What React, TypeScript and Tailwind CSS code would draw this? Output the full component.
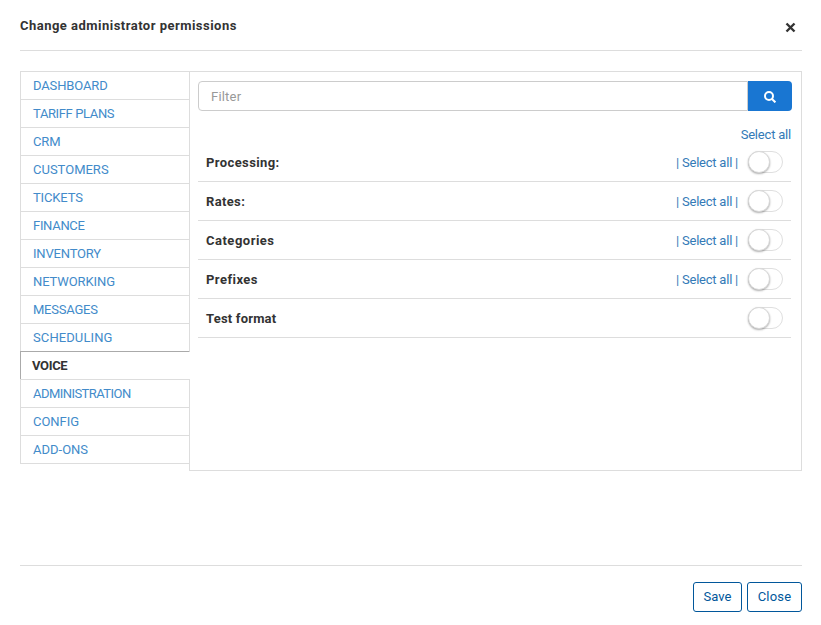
const sections = [
  { label: 'DASHBOARD', tracking: 'tracking-[-0.13px]' },
  { label: 'TARIFF PLANS', tracking: 'tracking-[-0.38px]' },
  { label: 'CRM', tracking: 'tracking-[-0.1px]' },
  { label: 'CUSTOMERS', tracking: 'tracking-[0px]' },
  { label: 'TICKETS', tracking: 'tracking-[-0.15px]' },
  { label: 'FINANCE', tracking: 'tracking-[-0.3px]' },
  { label: 'INVENTORY', tracking: 'tracking-[-0.18px]' },
  { label: 'NETWORKING', tracking: 'tracking-[-0.1px]' },
  { label: 'MESSAGES', tracking: 'tracking-[-0.23px]' },
  { label: 'SCHEDULING', tracking: 'tracking-[0.1px]' },
  { label: 'VOICE', tracking: 'tracking-[-0.35px]', active: true },
  { label: 'ADMINISTRATION', tracking: 'tracking-[-0.55px]' },
  { label: 'CONFIG', tracking: 'tracking-[-0.05px]' },
  { label: 'ADD-ONS', tracking: 'tracking-[0px]' },
];

const rows = [
  { label: 'Processing:', tracking: 'tracking-[0.4px]', all: true },
  { label: 'Rates:', tracking: 'tracking-[0.35px]', all: true },
  { label: 'Categories', tracking: 'tracking-[0.5px]', all: true },
  { label: 'Prefixes', tracking: 'tracking-[0.45px]', all: true },
  { label: 'Test format', tracking: 'tracking-[0.2px]', all: false },
];

function Toggle() {
  return (
    <span className="flex h-[22px] w-[35px] rounded-full border border-[#dfdfdf] bg-white">
      <span className="-mt-px -ml-px size-[22px] rounded-full border border-[#d8d8d8] bg-white shadow-[0_1px_2px_rgba(0,0,0,0.32)]" />
    </span>
  );
}

function NavItem({ label, tracking, active }: { label: string; tracking: string; active?: boolean }) {
  const tone = active
    ? 'border-t-[#aaa] border-l-[#aaa] border-r-white pl-[11px] font-bold text-[#333]'
    : 'border-[#ddd] pl-3 text-[#428bca]';
  return <li className={`flex h-7 items-center border-t border-r border-l ${tone} ${tracking}`}>{label}</li>;
}

export default function App() {
  return (
    <div className="flex h-[625px] w-[821px] flex-col bg-white pr-[19px] pl-5 font-[Roboto,'Liberation_Sans',sans-serif] text-[13px] leading-[18px] tracking-[0.2px] text-[#333]">
      <header className="flex h-[51px] items-center justify-between border-b border-[#ddd] pr-[6px]">
        <h1 className="pt-px font-bold tracking-[0.48px]">Change administrator permissions</h1>
        <svg className="mt-[5px] size-[11px]" viewBox="0 0 11 11" fill="none" stroke="#333" strokeWidth="2.4">
          <path d="M1.5 1.5 9.5 9.5M9.5 1.5 1.5 9.5" />
        </svg>
      </header>

      <main className="mt-5 flex h-[400px]">
        <nav className="w-[170px]">
          <ul className="h-[393px] border-b border-[#ddd]">
            {sections.map((section) => (
              <NavItem key={section.label} {...section} />
            ))}
          </ul>
          <div className="h-[7px] border-r border-[#ddd]" />
        </nav>
        <section className="flex flex-1 flex-col border-t border-r border-b border-[#ddd] pt-[9px] pr-[9px] pl-2">
          <div className="flex h-[30px]">
            <div className="flex w-[550px] items-center rounded-l border border-[#ccc] pt-0.5 pl-3 text-[#999]">Filter</div>
            <button className="flex w-11 items-center justify-center rounded-r bg-[#1976d2]">
              <svg className="mt-px size-3" viewBox="0 0 12 12" fill="none" stroke="white" strokeWidth="2">
                <circle cx="5" cy="5" r="4" />
                <path d="m8 8 3.4 3.4" />
              </svg>
            </button>
          </div>
          <div className="mt-[15px] flex h-[17px] justify-end pr-px tracking-[-0.2px] text-[#337ab7]">Select all</div>
          <div className="mr-px">
            {rows.map((row) => (
              <div key={row.label} className="flex h-[39px] items-center border-b border-[#ddd] px-2">
                <span className={`flex-1 pt-0.5 font-bold ${row.tracking}`}>{row.label}</span>
                {row.all && <span className="mr-[10px] pt-0.5 tracking-[-0.23px] text-[#337ab7]">| Select all |</span>}
                <Toggle />
              </div>
            ))}
          </div>
        </section>
      </main>

      <footer className="mt-[94px] flex justify-end gap-[5px] border-t border-[#ddd] pt-4">
        <button className="h-[30px] w-[49px] rounded-[3px] border border-[#01579b] tracking-[0px] text-[#01579b]">Save</button>
        <button className="h-[30px] w-[55px] rounded-[3px] border border-[#01579b] text-[#01579b]">Close</button>
      </footer>
    </div>
  );
}
